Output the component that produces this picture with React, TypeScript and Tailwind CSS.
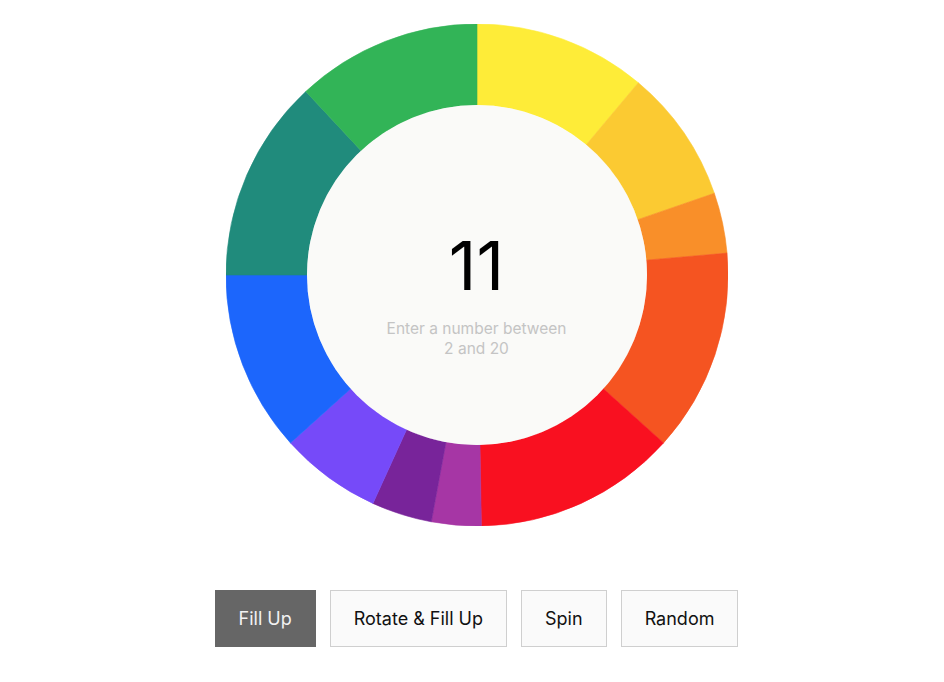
import React from "react";

interface Segment {
  color: string;
  span: number;
}

// angles in degrees, clockwise from 12 o'clock
const segments: Segment[] = [
  { color: "#FEEC38", span: 40 },
  { color: "#FBCA32", span: 31 },
  { color: "#F98F29", span: 14 },
  { color: "#F55421", span: 47 },
  { color: "#F91020", span: 47 },
  { color: "#A636A5", span: 11.5 },
  { color: "#78249A", span: 14 },
  { color: "#764AF9", span: 23.5 },
  { color: "#1C66FC", span: 42 },
  { color: "#208B7C", span: 47 },
  { color: "#32B457", span: 43 },
];

const SIZE = 502;
const C = SIZE / 2;
const R = 251;
const r = 170;

function point(radius: number, deg: number) {
  const a = ((deg - 90) * Math.PI) / 180;
  return `${(C + radius * Math.cos(a)).toFixed(2)} ${(C + radius * Math.sin(a)).toFixed(2)}`;
}

function arcPath(start: number, end: number) {
  const large = end - start > 180 ? 1 : 0;
  return [
    `M ${point(R, start)}`,
    `A ${R} ${R} 0 ${large} 1 ${point(R, end)}`,
    `L ${point(r, end)}`,
    `A ${r} ${r} 0 ${large} 0 ${point(r, start)}`,
    "Z",
  ].join(" ");
}

function Donut() {
  let angle = 0;
  return (
    <div className="relative w-[502px] h-[502px]">
      <svg width={SIZE} height={SIZE} viewBox={`0 0 ${SIZE} ${SIZE}`}>
        {segments.map((seg, idx) => {
          const start = angle;
          angle += seg.span;
          return (
            <path
              key={idx}
              d={arcPath(start, angle)}
              fill={seg.color}
              stroke={seg.color}
              strokeWidth={0.6}
            />
          );
        })}
        <circle cx={C} cy={C} r={r} fill="#FAFAF8" />
      </svg>

      {/* Center label */}
      <div className="absolute inset-0 flex flex-col items-center pt-[207px]">
        <div className="text-[68px] leading-none font-normal text-black">
          11
        </div>
        <div className="mt-[20px] text-[15.5px] leading-[20px] text-center text-[#c4c4c4]">
          Enter a number between
          <br />
          2 and 20
        </div>
      </div>
    </div>
  );
}

export default function App() {
  const buttons = ["Fill Up", "Rotate & Fill Up", "Spin", "Random"];

  return (
    <div className="min-h-[682px] bg-white flex flex-col items-center pt-[24px] pl-[9px] font-['Inter',sans-serif]">
      <Donut />

      {/* Controls */}
      <div className="mt-[64px] flex gap-[14px]">
        {buttons.map((label, idx) => (
          <button
            key={label}
            className={`h-[57px] px-[23px] text-[18px] border ${
              idx === 0
                ? "bg-[#666666] border-[#666666] text-[#f2f2f2]"
                : "bg-[#fafafa] border-[#cfcfcf] text-[#111111]"
            }`}
          >
            {label}
          </button>
        ))}
      </div>
    </div>
  );
}
